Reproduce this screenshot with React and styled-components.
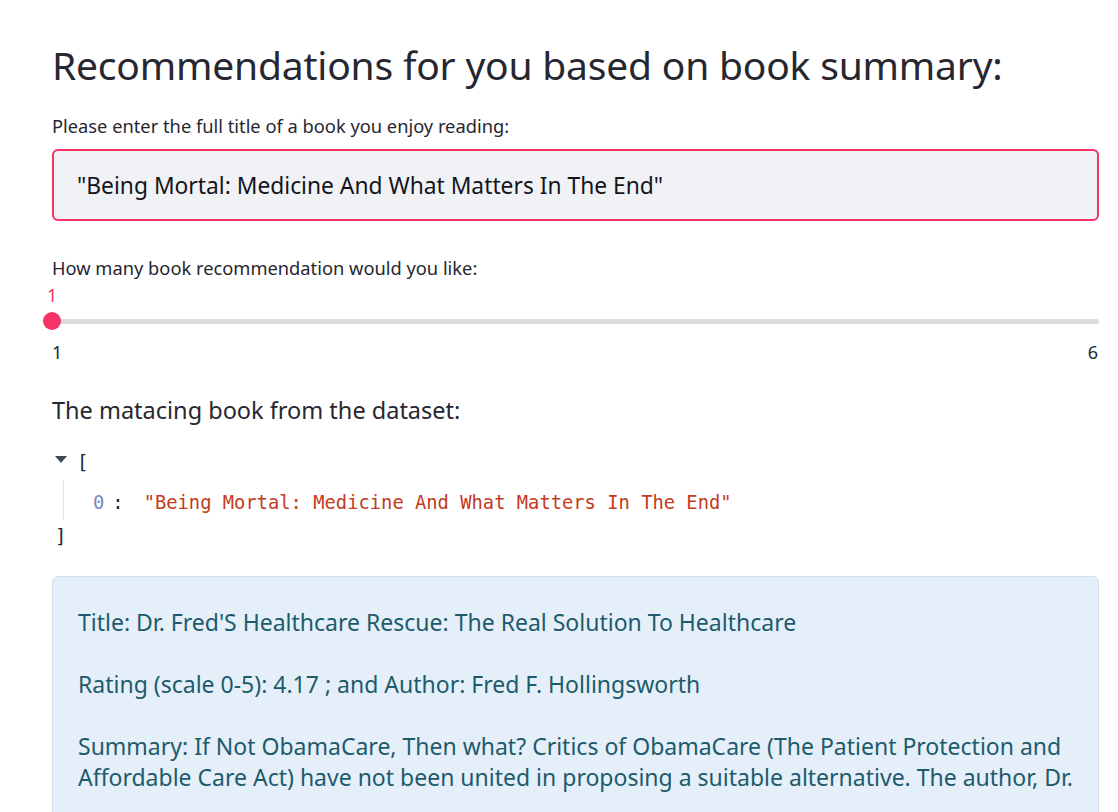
import React from 'react';
import styled, { createGlobalStyle } from 'styled-components';

const accent = '#f63366';

const GlobalStyle = createGlobalStyle`
  html, body {
    margin: 0;
    padding: 0;
    background: #ffffff;
    font-family: 'Noto Sans', 'Open Sans', sans-serif;
    color: #262730;
    overflow: hidden;
  }
`;

/////////////// LAYOUT /////////////
const Page = styled.div`
  padding: 41px 19px 0 52px;
  display: flex;
  flex-direction: column;
  width: 1047px;
`;

/////////////// TEXTS /////////////
const Title = styled.h1`
  font-size: 39px;
  font-weight: 400;
  margin: 0 0 26px 0;
  line-height: 47px;
  color: #262730;
  letter-spacing: -0.2px;
`;

const Label = styled.label`
  font-size: 18.3px;
  line-height: 24px;
  color: #262730;
  display: block;
  margin-bottom: ${props => props.gap || '11px'};
`;

const SubHeading = styled.p`
  font-size: 23.5px;
  margin: 0 0 20px 0;
  line-height: 32px;
`;

/////////////// INPUT /////////////
const TextBox = styled.div`
  height: 68px;
  border: 2px solid ${accent};
  border-radius: 6px;
  background: #f0f2f6;
  display: flex;
  align-items: center;
  padding: 0 23px;
  font-size: 22.8px;
  color: #14151a;
  margin-bottom: 35px;
`;

/////////////// SLIDER /////////////
const SliderWrap = styled.div`
  display: flex;
  flex-direction: column;
  margin-bottom: 32px;
`;

const SliderValue = styled.div`
  color: ${accent};
  font-size: 18px;
  line-height: 20px;
  margin-left: -5px;
  margin-bottom: 13.5px;
`;

const Track = styled.div`
  position: relative;
  height: 5px;
  border-radius: 3px;
  background: #dcdcdc;
`;

const Thumb = styled.div`
  position: absolute;
  left: -9px;
  top: -6.5px;
  width: 18px;
  height: 18px;
  border-radius: 50%;
  background: ${accent};
`;

const TickRow = styled.div`
  display: flex;
  justify-content: space-between;
  font-size: 18px;
  margin-top: 18.5px;
  line-height: 20px;
  padding-right: 1px;
`;

/////////////// JSON /////////////
const JsonBlock = styled.div`
  font-family: 'DejaVu Sans Mono', 'Liberation Mono', monospace;
  font-size: 18.8px;
  line-height: 34px;
  color: #0b2b3a;
  margin-bottom: 22px;
`;

const JsonLine = styled.div`
  display: flex;
  align-items: center;
  padding-left: ${props => props.indent || '0px'};
`;

const Caret = styled.span`
  width: 0;
  height: 0;
  border-left: 6px solid transparent;
  border-right: 6px solid transparent;
  border-top: 7px solid #3f4a52;
  margin: 0 10px 0 3px;
  position: relative;
  top: -4px;
`;

const JsonBody = styled.div`
  margin-left: 11px;
  border-left: 1px solid #e2e2e2;
  padding: 6px 0 0 29px;
`;

const Index = styled.span`
  color: #7a88c8;
`;

const Colon = styled.span`
  margin: 0 20px 0 8px;
`;

const Str = styled.span`
  color: #c43b1d;
`;

/////////////// INFO BOX /////////////
const InfoBox = styled.div`
  background: #e5eff9;
  border: 1px solid #cde0f3;
  border-radius: 6px;
  padding: 30px 8px 0 25px;
  color: #1d5b6c;
  font-size: 23px;
  line-height: 31px;
  height: 260px;
`;

const InfoPara = styled.p`
  margin: 0;
  & + & {
    margin-top: 31px;
  }
`;

export default function App() {
  return (
    <>
      <GlobalStyle />
      <Page>
        <Title>Recommendations for you based on book summary:</Title>
        <Label>Please enter the full title of a book you enjoy reading:</Label>
        <TextBox>"Being Mortal: Medicine And What Matters In The End"</TextBox>

        <Label gap="5px">How many book recommendation would you like:</Label>
        <SliderWrap>
          <SliderValue>1</SliderValue>
          <Track>
            <Thumb />
          </Track>
          <TickRow>
            <span>1</span>
            <span>6</span>
          </TickRow>
        </SliderWrap>

        <SubHeading>The matacing book from the dataset:</SubHeading>

        <JsonBlock>
          <JsonLine>
            <Caret />[
          </JsonLine>
          <JsonBody>
            <JsonLine>
              <Index>0</Index>
              <Colon>:</Colon>
              <Str>"Being Mortal: Medicine And What Matters In The End"</Str>
            </JsonLine>
          </JsonBody>
          <JsonLine indent="3px">]</JsonLine>
        </JsonBlock>

        <InfoBox>
          <InfoPara>Title: Dr. Fred'S Healthcare Rescue: The Real Solution To Healthcare</InfoPara>
          <InfoPara>Rating (scale 0-5): 4.17 ; and Author: Fred F. Hollingsworth</InfoPara>
          <InfoPara>
            Summary: If Not ObamaCare, Then what? Critics of ObamaCare (The Patient Protection and
            Affordable Care Act) have not been united in proposing a suitable alternative. The author, Dr.
          </InfoPara>
        </InfoBox>
      </Page>
    </>
  );
}
